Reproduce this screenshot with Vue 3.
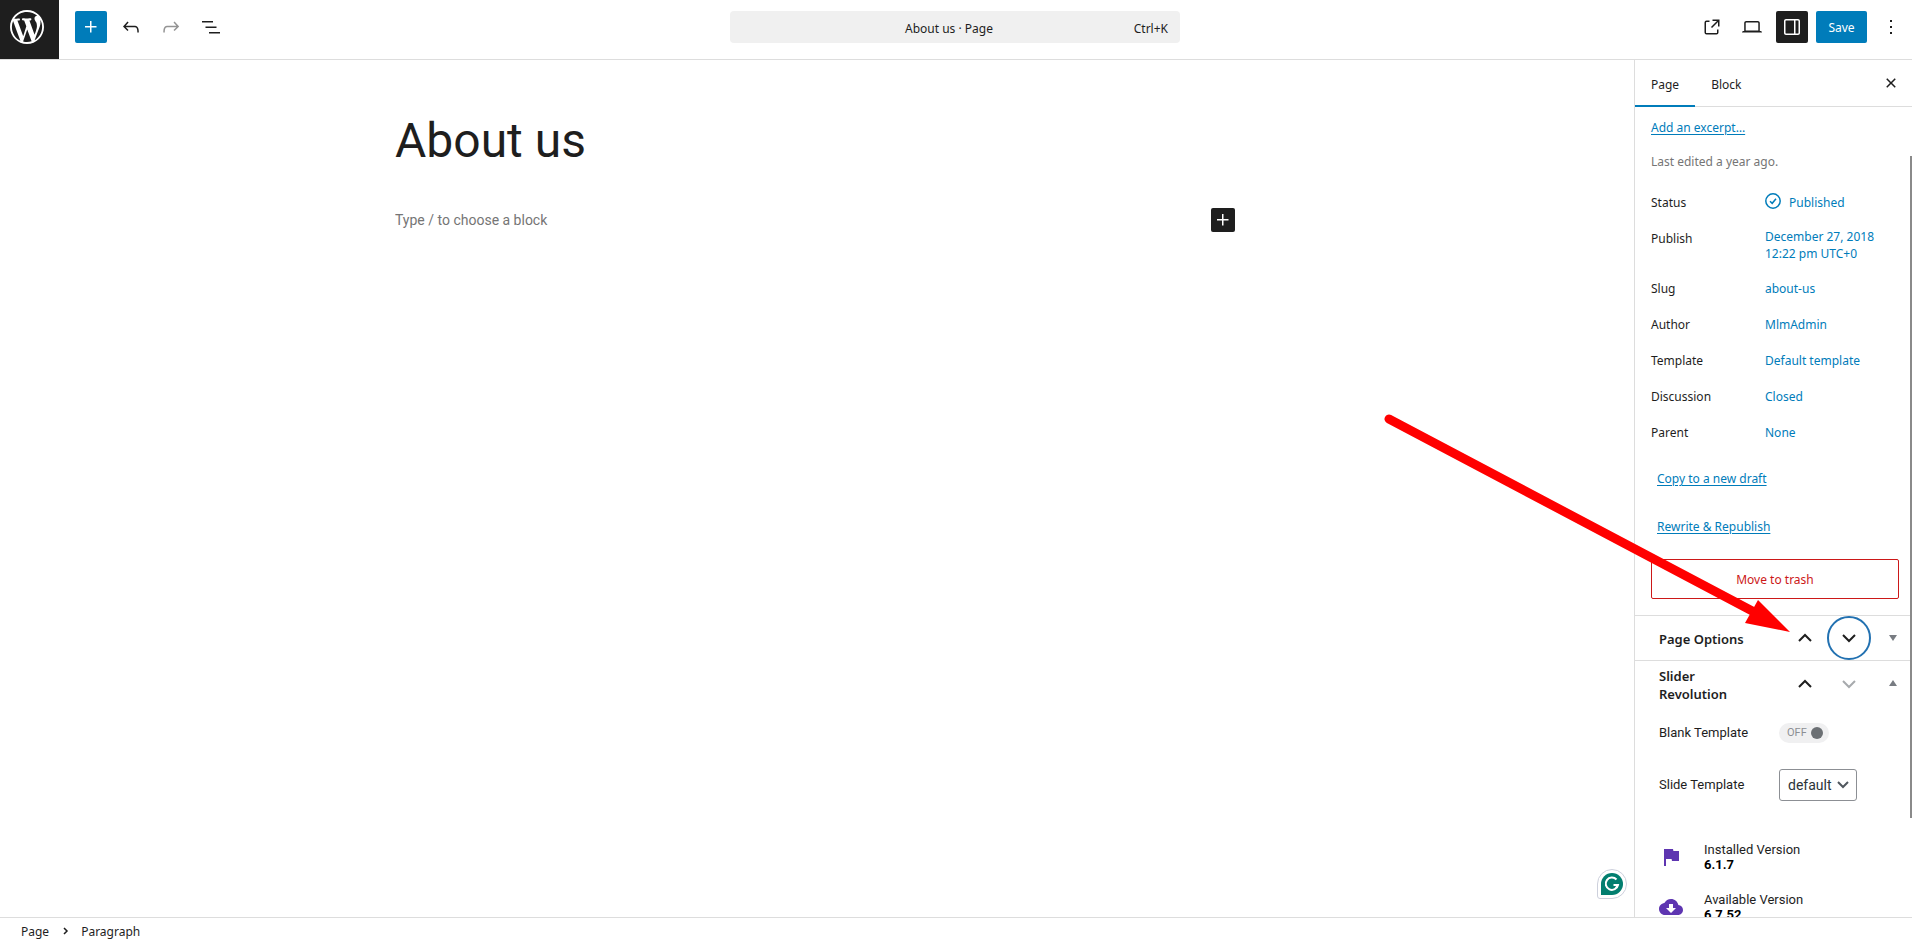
<script setup>
import { ref } from "vue";

const icons = {
  plus: "M11 12.5V17.5H12.5V12.5H17.5V11H12.5V6H11V11H6V12.5H11Z",
  undo: "M18.3 11.7c-.6-.6-1.4-.9-2.3-.9H6.7l2.9-3.3-1.1-1-4.5 5L8.5 16l1-1-2.7-2.7H16c.5 0 .9.2 1.3.5 1 1 1 3.4 1 4.5v.3h1.5v-.2c0-1.5 0-4.3-1.5-5.7z",
  redo: "M15.6 6.5l-1.1 1 2.9 3.3H8c-.9 0-1.7.3-2.3.9-1.4 1.5-1.4 4.2-1.4 5.6v.2h1.5v-.3c0-1.1 0-3.5 1-4.5.3-.3.7-.5 1.3-.5h9.2L14.5 15l1.1 1.1 4.6-4.6-4.6-5z",
  list: "M3 6h11v1.5H3V6Zm3.5 5.5h11V13h-11v-1.5ZM21 17H10v1.5h11V17Z",
  external: "M19.5 4.5h-7V6h4.44l-5.97 5.97 1.06 1.06L18 7.06v4.44h1.5v-7Zm-13 1a2 2 0 0 0-2 2v10a2 2 0 0 0 2 2h10a2 2 0 0 0 2-2v-3H17v3a.5.5 0 0 1-.5.5h-10a.5.5 0 0 1-.5-.5v-10a.5.5 0 0 1 .5-.5h3V5.5h-3Z",
  desktop: "M20.5 16h-.7V8c0-1.1-.9-2-2-2H6.2c-1.1 0-2 .9-2 2v8h-.7c-.8 0-1.5.7-1.5 1.5h20c0-.8-.7-1.5-1.5-1.5zM5.7 8c0-.3.2-.5.5-.5h11.6c.3 0 .5.2.5.5v7.6H5.7V8z",
  drawer: "M18 4H6c-1.1 0-2 .9-2 2v12c0 1.1.9 2 2 2h12c1.1 0 2-.9 2-2V6c0-1.1-.9-2-2-2zm-4 14.5H6c-.3 0-.5-.2-.5-.5V6c0-.3.2-.5.5-.5h8v13zm4.5-.5c0 .3-.2.5-.5.5h-2.5v-13H18c.3 0 .5.2.5.5v12z",
  more: "M13 19h-2v-2h2v2zm0-6h-2v-2h2v2zm0-6h-2V5h2v2z",
  close: "M12 13.06l3.712 3.713 1.061-1.06L13.061 12l3.712-3.712-1.06-1.06L12 10.938 8.288 7.227l-1.061 1.06L10.939 12l-3.712 3.712 1.06 1.061L12 13.061z",
  wordpress: "M20 10c0-5.51-4.49-10-10-10C4.48 0 0 4.49 0 10c0 5.52 4.48 10 10 10 5.51 0 10-4.48 10-10zM7.78 15.37L4.37 6.22c.55-.02 1.17-.08 1.17-.08.5-.06.44-1.13-.06-1.11 0 0-1.45.11-2.37.11-.18 0-.37 0-.58-.01C4.12 2.69 6.87 1.11 10 1.11c2.33 0 4.45.87 6.05 2.34-.68-.11-1.65.39-1.65 1.58 0 .74.45 1.36.9 2.1.35.61.55 1.36.55 2.46 0 1.49-1.4 5-1.4 5l-3.03-8.37c.54-.02.82-.17.82-.17.5-.05.44-1.25-.06-1.22 0 0-1.44.12-2.38.12-.87 0-2.33-.12-2.33-.12-.5-.03-.56 1.2-.06 1.22l.92.08 1.26 3.41zM17.41 10c.24-.64.74-1.87.43-4.25.7 1.29 1.05 2.71 1.05 4.25 0 3.29-1.73 6.24-4.4 7.78.97-2.59 1.94-5.2 2.92-7.78zM6.1 18.09C3.12 16.65 1.11 13.53 1.11 10c0-1.3.23-2.48.72-3.59C3.25 10.3 4.67 14.2 6.1 18.09zm4.03-6.63l2.58 6.98c-.86.29-1.76.45-2.71.45-.79 0-1.57-.11-2.29-.33.81-2.38 1.62-4.74 2.42-7.1z",
  flag: "M14.4 6L14 4H5v17h2v-7h5.6l.4 2h7V6z",
  cloud: "M19.35 10.04C18.67 6.59 15.64 4 12 4 9.11 4 6.6 5.64 5.35 8.04 2.34 8.36 0 10.91 0 14c0 3.31 2.69 6 6 6h13c2.76 0 5-2.24 5-5 0-2.64-2.05-4.78-4.65-4.96zM17 13l-5 5-5-5h3V9h4v4h3z"
};

const details = [
  { label: "Status", lines: ["Published"], icon: true },
  { label: "Publish", lines: ["December 27, 2018", "12:22 pm UTC+0"] },
  { label: "Slug", lines: ["about-us"] },
  { label: "Author", lines: ["MlmAdmin"] },
  { label: "Template", lines: ["Default template"] },
  { label: "Discussion", lines: ["Closed"] },
  { label: "Parent", lines: ["None"] }
];

const versions = [
  { label: "Installed Version", number: "6.1.7", icon: "flag" },
  { label: "Available Version", number: "6.7.52", icon: "cloud" }
];

const activeTab = ref("Page");
const blankTemplate = ref(false);
const slideTemplate = ref("default");
const paragraph = ref("");
</script>

<template>
  <div class="editor">
    <header class="header">
      <div class="headerLeft">
        <a class="siteLogo" href="#" aria-label="View Pages">
          <svg viewBox="0 0 20 20"><path :d="icons.wordpress" /></svg>
        </a>
        <button class="iconButton primary" aria-label="Add block">
          <svg viewBox="0 0 24 24"><path :d="icons.plus" /></svg>
        </button>
        <button class="iconButton" aria-label="Undo">
          <svg viewBox="0 0 24 24"><path :d="icons.undo" /></svg>
        </button>
        <button class="iconButton" aria-label="Redo" disabled>
          <svg viewBox="0 0 24 24"><path :d="icons.redo" /></svg>
        </button>
        <button class="iconButton" aria-label="Document Overview">
          <svg viewBox="0 0 24 24"><path :d="icons.list" /></svg>
        </button>
      </div>

      <button class="commandBar">
        <span class="commandTitle">About us · Page</span>
        <span class="shortcut">Ctrl+K</span>
      </button>

      <div class="headerRight">
        <a class="iconButton" href="#" aria-label="View Page">
          <svg viewBox="0 0 24 24"><path :d="icons.external" /></svg>
        </a>
        <button class="iconButton" aria-label="Preview">
          <svg viewBox="0 0 24 24"><path :d="icons.desktop" /></svg>
        </button>
        <button class="iconButton pressed" aria-label="Settings">
          <svg viewBox="0 0 24 24"><path fill-rule="evenodd" :d="icons.drawer" /></svg>
        </button>
        <button class="saveButton">Save</button>
        <button class="iconButton" aria-label="Options">
          <svg viewBox="0 0 24 24"><path :d="icons.more" /></svg>
        </button>
      </div>
    </header>

    <main class="canvas">
      <div class="post">
        <h1>About us</h1>
        <div class="emptyBlock">
          <input v-model="paragraph" aria-label="Empty block" placeholder="Type / to choose a block">
          <button class="inlineInserter" aria-label="Add block">
            <svg viewBox="0 0 24 24"><path :d="icons.plus" /></svg>
          </button>
        </div>
      </div>
      <button class="grammar" aria-label="Check grammar">
        <svg viewBox="0 0 30 30">
          <path d="M15 .5A14.500 14.500 0 0 1 15 29.500H3Q.5 29.500 .5 27V15A14.500 14.500 0 0 1 15 .5Z" fill="#fff" stroke="#cdd0dc" />
          <path d="M15 4A11 11 0 0 1 15 26H4V15A11 11 0 0 1 15 4Z" fill="#027e6f" />
          <path d="M19.500 10.500A6.200 6.200 0 1 0 21 16H16.500M18.500 19.500L21 16" fill="none" stroke="#fff" stroke-width="2" />
        </svg>
      </button>
    </main>

    <aside class="sidebar">
      <div class="tabs">
        <button
          v-for="tab in ['Page', 'Block']"
          :key="tab"
          class="tab"
          :class="{ active: activeTab === tab }"
          @click="activeTab = tab"
        >{{ tab }}</button>
        <button class="iconButton closeButton" aria-label="Close Settings">
          <svg viewBox="0 0 24 24"><path :d="icons.close" /></svg>
        </button>
      </div>

      <div class="panels">
        <section class="summary">
          <a class="excerpt" href="#">Add an excerpt…</a>
          <p class="edited">Last edited a year ago.</p>

          <div v-for="row in details" :key="row.label" class="detail">
            <span class="detailLabel">{{ row.label }}</span>
            <button class="detailValue">
              <svg v-if="row.icon" viewBox="0 0 16 16">
                <circle cx="8" cy="7" r="7.200" />
                <path d="M5 7.200L7.200 9.300L11 4.800" />
              </svg>
              <span>
                <span v-for="line in row.lines" :key="line" class="line">{{ line }}</span>
              </span>
            </button>
          </div>

          <div class="copyLinks">
            <a href="#">Copy to a new draft</a>
            <a href="#">Rewrite &amp; Republish</a>
          </div>
          <button class="trash">Move to trash</button>
        </section>

        <section class="metabox">
          <div class="metaHeader">
            <h2>Page Options</h2>
            <button aria-label="Move up"><svg viewBox="0 0 20 20"><path d="M4 13L10 7L16 13" /></svg></button>
            <button class="focused" aria-label="Move down"><svg viewBox="0 0 20 20"><path d="M4 7L10 13L16 7" /></svg></button>
            <button class="toggleBox" aria-label="Open Page Options"><svg viewBox="0 0 20 20"><path d="M6 7H14L10 13Z" /></svg></button>
          </div>
        </section>

        <section class="metabox">
          <div class="metaHeader tall">
            <h2>Slider Revolution</h2>
            <button aria-label="Move up"><svg viewBox="0 0 20 20"><path d="M4 13L10 7L16 13" /></svg></button>
            <button aria-label="Move down" disabled><svg viewBox="0 0 20 20"><path d="M4 7L10 13L16 7" /></svg></button>
            <button class="toggleBox" aria-label="Close Slider Revolution"><svg viewBox="0 0 20 20"><path d="M6 12H14L10 6Z" /></svg></button>
          </div>

          <div class="field">
            <label for="blank-template">Blank Template</label>
            <span class="switch" :class="{ on: blankTemplate }">
              <input id="blank-template" v-model="blankTemplate" type="checkbox">
              <span>{{ blankTemplate ? "ON" : "OFF" }}</span>
              <i class="knob"></i>
            </span>
          </div>
          <div class="field">
            <label for="slide-template">Slide Template</label>
            <span class="selectBox">
              <select id="slide-template" v-model="slideTemplate">
                <option>default</option>
              </select>
              <svg viewBox="0 0 12 12"><path d="M1 3L6 8L11 3" /></svg>
            </span>
          </div>

          <div class="versions">
            <div v-for="version in versions" :key="version.label" class="version">
              <svg viewBox="0 0 24 24"><path :d="icons[version.icon]" /></svg>
              <div>
                <span class="line">{{ version.label }}</span>
                <strong class="line">{{ version.number }}</strong>
              </div>
            </div>
          </div>
        </section>
      </div>
      <div class="scrollThumb"></div>
    </aside>

    <footer class="breadcrumb">
      <a href="#">Page</a>
      <svg viewBox="0 0 8 10"><path d="M3 1L6 4L3 7" /></svg>
      <a href="#">Paragraph</a>
    </footer>

    <!-- Pointer to the move buttons of the meta box -->
    <svg class="pointer" viewBox="0 0 410 220">
      <path d="M9 9L376 203" stroke="#f00" stroke-width="9" stroke-linecap="round" />
      <path d="M410 222L378 190L365 213Z" fill="#f00" />
    </svg>
  </div>
</template>

<style>
body {
  margin: 0;
}
</style>

<style scoped>
.editor {
  position: relative;
  display: grid;
  grid-template-columns: 1fr 278px;
  grid-template-rows: 60px minmax(0, 1fr) 22px;
  height: 100vh;
  overflow: hidden;
  background: #fff;
  color: #1e1e1e;
  font-family: "Noto Sans", "Open Sans", sans-serif;
  font-size: 12px;
  line-height: 20px;
}

.editor * {
  box-sizing: border-box;
}

button {
  padding: 0;
  border: none;
  background: none;
  color: inherit;
  font: inherit;
  cursor: pointer;
}

svg {
  display: block;
  flex-shrink: 0;
}

.line {
  display: block;
}

/* Top bar */
.header {
  grid-column: 1 / -1;
  display: grid;
  grid-template-columns: 1fr 450px 1fr;
  padding-right: 2px;
  border-bottom: 1px solid #ddd;
}

.headerLeft,
.headerRight {
  display: flex;
  gap: 8px;
  height: 54px;
  align-items: center;
}

.headerRight {
  justify-content: flex-end;
  padding-right: 3px;
}

.siteLogo {
  align-self: flex-start;
  width: 59px;
  height: 59px;
  margin-right: 8px;
  padding: 10px;
  background: #1e1e1e;
}

.siteLogo svg {
  width: 34px;
  height: 34px;
  fill: #fff;
}

.iconButton {
  display: flex;
  align-items: center;
  justify-content: center;
  width: 32px;
  height: 32px;
  border-radius: 2px;
  color: #1e1e1e;
}

.iconButton svg {
  width: 24px;
  height: 24px;
  fill: currentColor;
}

.iconButton:disabled {
  color: #949494;
}

.iconButton.primary {
  background: #007cba;
  color: #fff;
}

.iconButton.pressed {
  background: #1e1e1e;
  color: #fff;
}

.commandBar {
  display: grid;
  grid-template-columns: 1fr auto 1fr;
  align-items: center;
  height: 32px;
  margin-top: 11px;
  padding: 3px 12px 0 0;
  border-radius: 4px;
  background: #f0f0f0;
}

.commandTitle {
  grid-column: 2;
}

.shortcut {
  text-align: right;
}

.saveButton {
  width: 51px;
  height: 32px;
  padding-top: 2px;
  border-radius: 2px;
  background: #007cba;
  color: #fff;
}

/* Canvas */
.canvas {
  position: relative;
  padding-right: 4px;
  font-family: Roboto, sans-serif;
}

.post {
  max-width: 840px;
  margin: 0 auto;
  padding-top: 53px;
}

h1 {
  margin: 0 0 39px;
  font-size: 48px;
  font-weight: 400;
  line-height: 56px;
}

.emptyBlock {
  display: flex;
  align-items: center;
}

.emptyBlock input {
  flex: 1;
  padding: 0;
  border: none;
  outline: none;
  font: 14px/24px Roboto, sans-serif;
}

.emptyBlock input::placeholder {
  color: #757575;
}

.inlineInserter {
  width: 24px;
  height: 24px;
  border-radius: 2px;
  background: #1e1e1e;
  fill: #fff;
}

.grammar {
  position: absolute;
  right: 7px;
  bottom: 18px;
  width: 30px;
  height: 30px;
}

/* Settings sidebar */
.sidebar {
  position: relative;
  display: flex;
  flex-direction: column;
  min-height: 0;
  border-left: 1px solid #ddd;
}

.tabs {
  display: flex;
  height: 47px;
  border-bottom: 1px solid #ddd;
}

.tab {
  height: 47px;
  padding: 4px 16px 0;
  border-bottom: 2px solid transparent;
}

.tab.active {
  border-bottom-color: #007cba;
}

.closeButton {
  margin: 7px 5px 0 auto;
}

.panels {
  flex: 1;
  min-height: 0;
  overflow: hidden;
}

.summary {
  display: flex;
  flex-direction: column;
  padding: 11px 13px 16px 16px;
}

.summary a {
  align-self: flex-start;
  color: #007cba;
  text-underline-offset: 2px;
}

.edited {
  margin: 14px 0;
  color: #757575;
}

.detail {
  display: flex;
  align-items: flex-start;
  margin-bottom: 4px;
}

.detailLabel {
  width: 114px;
  height: 32px;
  line-height: 34px;
}

.detailValue {
  display: flex;
  align-items: center;
  gap: 8px;
  min-height: 32px;
  padding: 6px 0;
  color: #007cba;
  line-height: 17px;
  text-align: left;
}

.detailValue svg {
  width: 16px;
  height: 16px;
  overflow: visible;
  fill: none;
  stroke: currentColor;
  stroke-width: 1.5;
}

.copyLinks {
  display: flex;
  flex-direction: column;
  gap: 16px;
  padding: 11px 6px 16px;
  line-height: 32px;
}

.trash {
  height: 40px;
  padding-top: 2px;
  border: 1px solid #cc1818;
  border-radius: 2px;
  color: #cc1818;
}

/* Meta boxes */
.metabox {
  border-top: 1px solid #ddd;
}

.metaHeader {
  display: flex;
  align-items: center;
  height: 44px;
  padding-left: 24px;
}

.metaHeader.tall {
  height: 46px;
}

h2 {
  flex: 1;
  margin: 0;
  padding: 2px 24px 0 0;
  font-size: 13px;
  font-weight: 600;
  line-height: 18px;
}

.metaHeader button {
  display: flex;
  align-items: center;
  justify-content: center;
  width: 44px;
  height: 44px;
  border-radius: 50%;
}

.metaHeader button:disabled {
  color: #a7aaad;
}

.metaHeader button.focused {
  border: 2px solid #2271b1;
}

.metaHeader svg {
  width: 20px;
  height: 20px;
  fill: none;
  stroke: currentColor;
  stroke-width: 2;
}

.metaHeader .toggleBox {
  width: 41px;
  padding-left: 3px;
}

.toggleBox svg {
  fill: #787c82;
  stroke: none;
}

.field {
  display: flex;
  align-items: center;
  height: 52px;
  padding-left: 24px;
  font-family: Roboto, sans-serif;
  font-size: 13px;
}

.field label {
  width: 120px;
}

.switch {
  position: relative;
  display: flex;
  align-items: center;
  justify-content: space-between;
  width: 50px;
  height: 20px;
  padding: 0 6px 0 8px;
  border-radius: 10px;
  background: #f0f0f1;
  color: #8c8f94;
  font-size: 11px;
}

.switch input {
  position: absolute;
  inset: 0;
  width: 100%;
  height: 100%;
  margin: 0;
  opacity: 0;
  cursor: pointer;
}

.switch.on {
  flex-direction: row-reverse;
}

.knob {
  width: 12px;
  height: 12px;
  border-radius: 50%;
  background: #6c7074;
}

/* The arrow shares the grid cell with the select */
.selectBox {
  display: grid;
  align-items: center;
}

.selectBox select {
  grid-area: 1 / 1;
  width: 78px;
  height: 32px;
  padding: 0 8px;
  border: 1px solid #8c8f94;
  border-radius: 3px;
  appearance: none;
  background: #fff;
  color: #2c3338;
  font: 14px Roboto, sans-serif;
}

.selectBox svg {
  grid-area: 1 / 1;
  justify-self: end;
  width: 12px;
  height: 12px;
  margin-right: 8px;
  fill: none;
  stroke: #50575e;
  stroke-width: 2;
  pointer-events: none;
}

.versions {
  display: flex;
  flex-direction: column;
  gap: 20px;
  padding: 31px 24px;
  font-family: Roboto, sans-serif;
  font-size: 13px;
  line-height: 15px;
}

.version {
  display: flex;
  align-items: center;
  gap: 21px;
}

.version svg {
  width: 24px;
  height: 24px;
  fill: #5e35b1;
}

.version strong {
  color: #000;
}

.scrollThumb {
  position: absolute;
  top: 96px;
  right: 0;
  bottom: 99px;
  width: 2px;
  background: #8a8a8a;
}

/* Bottom bar */
.breadcrumb {
  grid-column: 1 / -1;
  display: flex;
  align-items: center;
  gap: 12px;
  padding: 6px 21px 0;
  border-top: 1px solid #ddd;
}

.breadcrumb a {
  color: inherit;
  text-decoration: none;
}

.breadcrumb svg {
  width: 8px;
  height: 10px;
  fill: none;
  stroke: currentColor;
  stroke-width: 1.5;
}

.pointer {
  position: absolute;
  top: 410px;
  right: 122px;
  width: 410px;
  height: 220px;
  overflow: visible;
  fill: none;
  pointer-events: none;
}
</style>
